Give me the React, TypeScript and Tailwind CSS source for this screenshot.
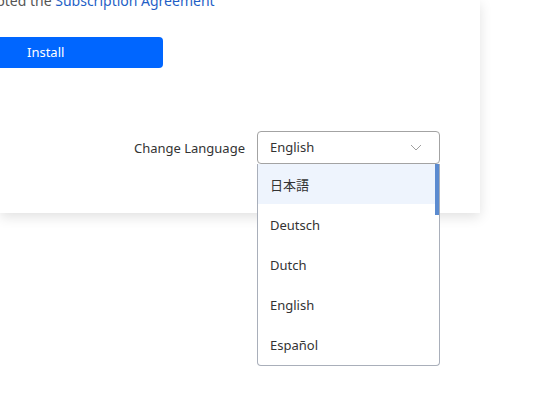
const languages = ["日本語", "Deutsch", "Dutch", "English", "Español"];

function Chevron() {
  return (
    <svg width="12" height="7" viewBox="0 0 12 7" fill="none" className="text-[#a0a0a0]">
      <path d="M1 1l5 5 5-5" stroke="currentColor" strokeWidth="1" />
    </svg>
  );
}

function LanguageSelect() {
  return (
    <div className="relative">
      <div className="flex h-[33px] w-[183px] items-center justify-between rounded-[4px] border border-[#a3a3a3] bg-white pl-[12px] pr-[17px] text-[13px] text-[#333]">
        <span className="pt-[1px]">English</span>
        <Chevron />
      </div>
      <div className="absolute left-0 top-[33px] z-10 flex h-[202px] w-[183px] flex-col overflow-hidden rounded-b-[4px] border border-t-0 border-[#a9afba] bg-white">
        {languages.map((lang, i) => (
          <div
            key={lang}
            className={
              i === 0
                ? "flex h-[40px] shrink-0 items-center bg-[#eef4fd] pl-[12px] pt-[3px] text-[13px] text-[#333]"
                : "flex h-[40px] shrink-0 items-center pl-[12px] pt-[3px] text-[13px] text-[#333]"
            }
          >
            {lang}
          </div>
        ))}
        <div className="absolute right-0 top-0 h-[51px] w-[4px] bg-[#5b8bd0]" />
      </div>
    </div>
  );
}

export default function App() {
  return (
    <div
      className="h-[405px] w-[540px] overflow-hidden bg-white"
      style={{ fontFamily: '"Noto Sans", "Noto Sans CJK JP", sans-serif' }}
    >
      <div className="flex h-[213px] w-[480px] flex-col shadow-[0_4px_12px_rgba(0,0,0,0.12)]">
        <p className="mt-[-9px] whitespace-nowrap text-[14px] leading-[20px] text-[#555]">
          <span className="ml-[-33px]">accepted the </span>
          <span className="text-[#1f5fc6]">Subscription Agreement</span>
        </p>
        <button className="ml-[-20px] mt-[26px] flex h-[31px] w-[183px] items-center rounded-[4px] bg-[#0066ff] pl-[47px] text-[13px] text-white">
          Install
        </button>
        <div className="mt-[63px] flex items-start justify-end gap-[12px] pr-[40px]">
          <span className="mt-[8px] text-[13px] text-[#333]">Change Language</span>
          <LanguageSelect />
        </div>
      </div>
    </div>
  );
}
